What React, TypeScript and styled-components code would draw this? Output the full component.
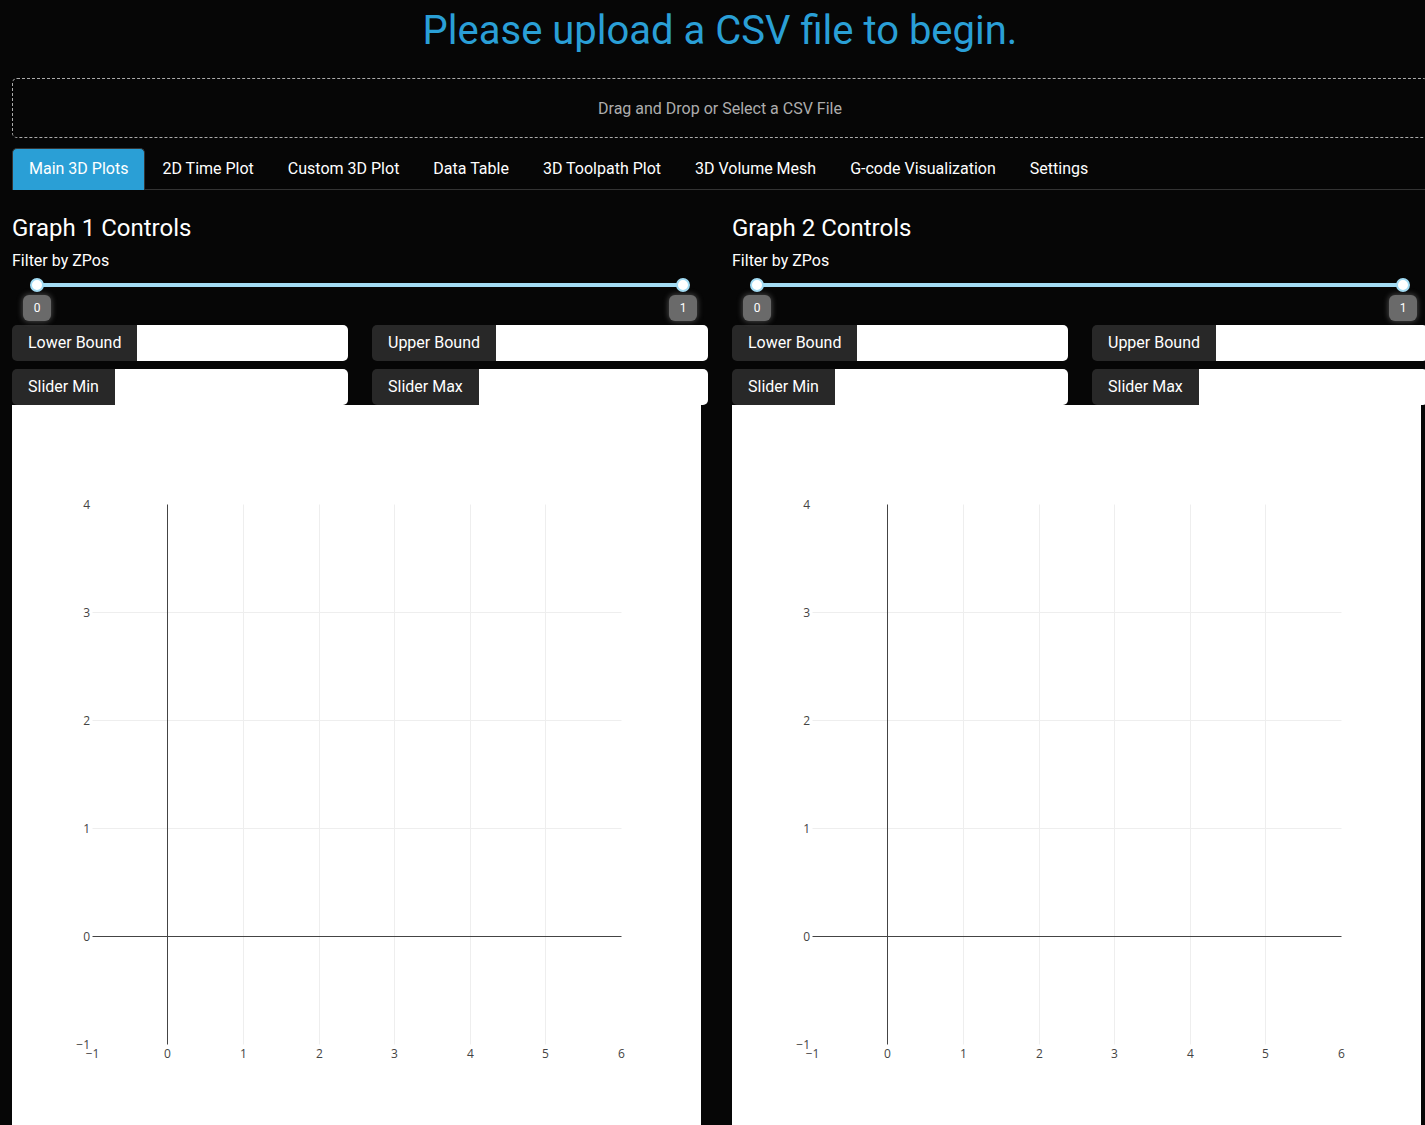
import React from 'react'
import styled, { createGlobalStyle } from 'styled-components'

const GlobalStyle = createGlobalStyle`
  html, body {
    margin: 0;
    background: #060606;
    overflow-x: hidden;
  }
  body {
    font-family: Roboto, "Liberation Sans", sans-serif;
    color: #fff;
  }
`

const Page = styled.div`
  width: 1440px;
  box-sizing: border-box;
  padding: 0 12px;
`

const Title = styled.h1`
  margin: 7px 0 0;
  height: 61px;
  font-size: 40px;
  font-weight: 400;
  line-height: 1.2;
  text-align: center;
  color: #2a9fd6;
`

const Upload = styled.div`
  box-sizing: border-box;
  height: 60px;
  margin: 10px 0;
  padding-top: 1px;
  border: 1px dashed #aaa;
  border-radius: 5px;
  line-height: 58px;
  text-align: center;
  font-size: 16px;
  color: #adadad;
`

const Tabs = styled.div`
  display: flex;
  border-bottom: 1px solid #333;
`

const Tab = styled.div<{ $active?: boolean }>`
  padding: 8px 16px 9px;
  line-height: 24px;
  font-size: 16px;
  color: #fff;
  border: 1px solid ${p => (p.$active ? '#333' : 'transparent')};
  border-bottom: none;
  border-radius: 5px 5px 0 0;
  background: ${p => (p.$active ? '#2a9fd6' : 'transparent')};
  margin-bottom: -1px;
`

const Columns = styled.div`
  display: grid;
  grid-template-columns: 696px 696px;
  column-gap: 24px;
  margin-top: 24px;
`

const Column = styled.div`
  display: flex;
  flex-direction: column;
  min-width: 0;
`

const Heading = styled.h4`
  margin: 0 0 6px;
  font-size: 24px;
  font-weight: 400;
  line-height: 1.2;
`

const FilterLabel = styled.div`
  font-size: 16px;
  line-height: 24px;
`

const SliderWrap = styled.div`
  position: relative;
  height: 52px;
  margin: 0 25px;
`

const Track = styled.div`
  position: absolute;
  left: 0;
  right: 0;
  top: 10px;
  height: 4px;
  border-radius: 2px;
  background: #a3dcf4;
`

const Handle = styled.div<{ $at: number }>`
  position: absolute;
  top: 5px;
  left: ${p => p.$at}%;
  width: 14px;
  height: 14px;
  margin-left: -7px;
  box-sizing: border-box;
  border: 2px solid #a3dcf4;
  border-radius: 50%;
  background: #fff;
`

const Tip = styled.div<{ $at: number }>`
  position: absolute;
  top: 22px;
  left: ${p => p.$at}%;
  width: 28px;
  height: 26px;
  margin-left: -14px;
  border-radius: 6px;
  background: #6a6a6a;
  box-shadow: 0 0 6px rgba(210, 210, 210, 0.4);
  font-size: 12px;
  line-height: 26px;
  text-align: center;
  color: #fff;
`

const Inputs = styled.div`
  display: grid;
  grid-template-columns: minmax(0, 1fr) minmax(0, 1fr);
  gap: 8px 24px;
`

const InputGroup = styled.div`
  display: flex;
  height: 36px;
  min-width: 0;
`

const GroupLabel = styled.span`
  padding: 0 16px;
  line-height: 36px;
  font-size: 16px;
  background: #282828;
  border-radius: 5px 0 0 5px;
  white-space: nowrap;
`

const Field = styled.input`
  flex: 1;
  width: 0;
  min-width: 0;
  border: none;
  outline: none;
  background: #fff;
  border-radius: 0 5px 5px 0;
  padding: 0 12px;
  font-size: 16px;
`

const PlotBox = styled.div`
  width: 689px;
  height: 760px;
  background: #fff;
`

// pixel positions of x ticks -1..6 inside the plot
const XPOS = [80, 155, 231, 307, 382, 458, 533, 609]
const px = (v: number) => XPOS[v + 1] + 0.5
const py = (v: number) => 639 - (v + 1) * 108 + 0.5
const fmt = (v: number) => (v < 0 ? '\u2212' + Math.abs(v) : String(v))

const Plot = () => (
  <PlotBox>
    <svg width="689" height="760" fontFamily='"Open Sans", Verdana, sans-serif' fontSize="12">
      {[1, 2, 3, 4, 5].map(v => (
        <line key={'gx' + v} x1={px(v)} x2={px(v)} y1={py(4)} y2={py(-1)} stroke="#eee" />
      ))}
      {[1, 2, 3].map(v => (
        <line key={'gy' + v} x1={px(-1)} x2={px(6)} y1={py(v)} y2={py(v)} stroke="#eee" />
      ))}
      <line x1={px(0)} x2={px(0)} y1={py(4)} y2={py(-1)} stroke="#444" />
      <line x1={px(-1)} x2={px(6)} y1={py(0)} y2={py(0)} stroke="#444" />
      {[-1, 0, 1, 2, 3, 4].map(v => (
        <text key={'ty' + v} x={78} y={py(v) + 4.5} textAnchor="end" fill="#444">
          {fmt(v)}
        </text>
      ))}
      {[-1, 0, 1, 2, 3, 4, 5, 6].map(v => (
        <text key={'tx' + v} x={px(v)} y={653} textAnchor="middle" fill="#444">
          {fmt(v)}
        </text>
      ))}
    </svg>
  </PlotBox>
)

const GraphControls = ({ n }: { n: number }) => (
  <Column>
    <Heading>Graph {n} Controls</Heading>
    <FilterLabel>Filter by ZPos</FilterLabel>
    <SliderWrap>
      <Track />
      <Handle $at={0} />
      <Handle $at={100} />
      <Tip $at={0}>0</Tip>
      <Tip $at={100}>1</Tip>
    </SliderWrap>
    <Inputs>
      <InputGroup>
        <GroupLabel>Lower Bound</GroupLabel>
        <Field type="number" />
      </InputGroup>
      <InputGroup>
        <GroupLabel>Upper Bound</GroupLabel>
        <Field type="number" />
      </InputGroup>
      <InputGroup>
        <GroupLabel>Slider Min</GroupLabel>
        <Field type="number" />
      </InputGroup>
      <InputGroup>
        <GroupLabel>Slider Max</GroupLabel>
        <Field type="number" />
      </InputGroup>
    </Inputs>
    <Plot />
  </Column>
)

const tabs = [
  'Main 3D Plots',
  '2D Time Plot',
  'Custom 3D Plot',
  'Data Table',
  '3D Toolpath Plot',
  '3D Volume Mesh',
  'G-code Visualization',
  'Settings',
]

const App = () => {
  return (
    <Page>
      <GlobalStyle />
      <Title>Please upload a CSV file to begin.</Title>
      <Upload>Drag and Drop or Select a CSV File</Upload>
      <Tabs>
        {tabs.map((t, i) => (
          <Tab key={t} $active={i === 0}>
            {t}
          </Tab>
        ))}
      </Tabs>
      <Columns>
        <GraphControls n={1} />
        <GraphControls n={2} />
      </Columns>
    </Page>
  )
}

export default App
